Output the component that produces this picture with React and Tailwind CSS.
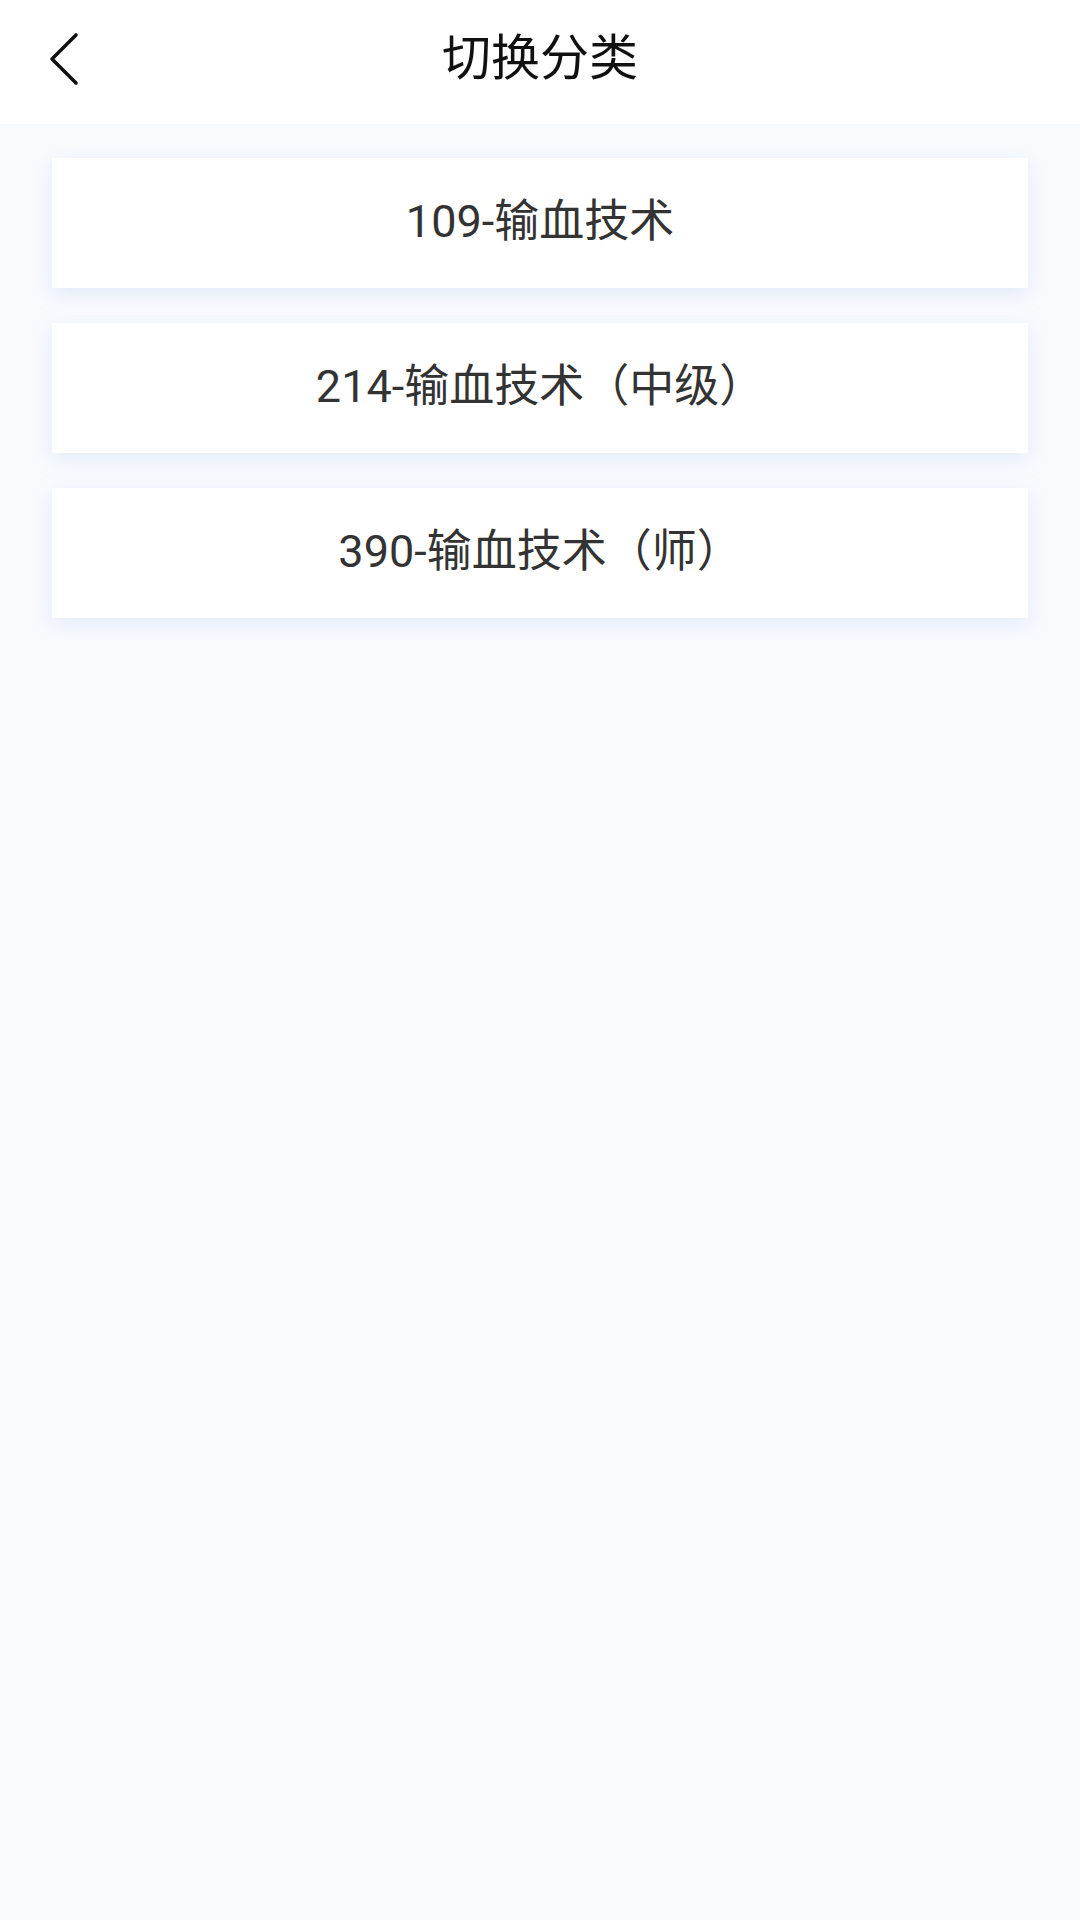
import React from 'react'

const ITEMS = ['109-输血技术', '214-输血技术（中级）', '390-输血技术（师）']

export default function App() {
  return (
    <div className="w-[1080px] min-h-[1920px] bg-[#f8fafe] font-['Roboto','Noto_Sans_CJK_SC',sans-serif]">
      <header className="h-[124px] bg-white relative flex items-center justify-center">
        <button className="absolute left-[40px] top-[26px] w-[50px] h-[66px] flex items-center justify-center">
          <svg width="34" height="54" viewBox="0 0 34 54" fill="none">
            <path d="M28 3L4 27L28 51" stroke="#111" strokeWidth="3.6" strokeLinecap="round" strokeLinejoin="round" />
          </svg>
        </button>
        <h1 className="text-[49px] leading-none text-[#111] -mt-[7px]">切换分类</h1>
      </header>

      <main className="px-[52px] pt-[34px] flex flex-col gap-[35px]">
        {ITEMS.map(t => (
          <div
            key={t}
            className="h-[130px] bg-white flex items-center justify-center shadow-[0_6px_18px_rgba(190,208,238,0.35)]"
          >
            <span className="text-[45px] leading-none text-[#333] -mt-[3px]">{t}</span>
          </div>
        ))}
      </main>
    </div>
  )
}
